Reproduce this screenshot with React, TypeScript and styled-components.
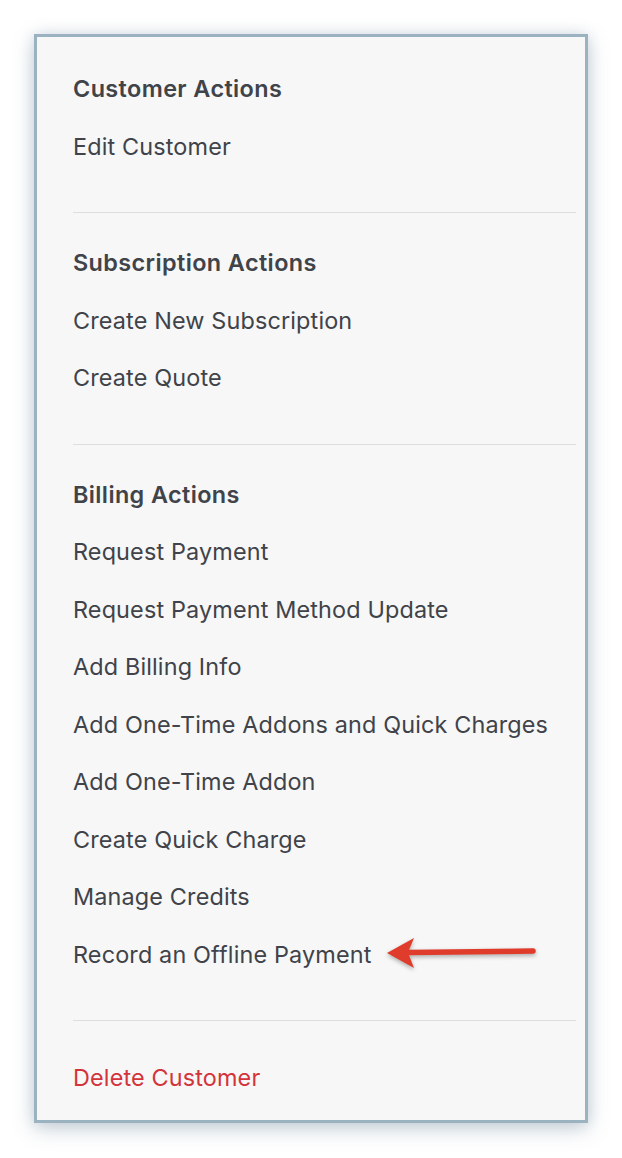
import React from "react";
import styled, { createGlobalStyle } from "styled-components";

const Global = createGlobalStyle`
  html, body { margin: 0; padding: 0; background: #ffffff; }
  body { font-family: Inter, "Noto Sans", sans-serif; -webkit-font-smoothing: antialiased; }
`;

const Page = styled.div`
  padding: 34px 0 35px 34px;
`;

const Panel = styled.div`
  position: relative;
  box-sizing: border-box;
  width: 554px;
  height: 1089px;
  background: #f7f7f7;
  border: 3px solid #9bb3c1;
  box-shadow: 0 6px 20px rgba(70, 100, 125, 0.28), 0 0 12px rgba(70, 100, 125, 0.14);
  padding: 23px 9px 0 36px;
  display: flex;
  flex-direction: column;
`;

const Section = styled.section<{ $top: number; $bottom: number; $divider?: boolean }>`
  padding: ${(p) => p.$top}px 0 ${(p) => p.$bottom}px;
  border-top: ${(p) => (p.$divider ? "1px solid #dedee1" : "none")};
`;

const Row = styled.div<{ $kind?: "heading" | "danger" }>`
  height: 57.5px;
  display: flex;
  align-items: center;
  font-size: 23.4px;
  font-weight: ${(p) => (p.$kind === "heading" ? 600 : 400)};
  color: ${(p) => (p.$kind === "danger" ? "#d3343a" : "#404349")};
  letter-spacing: ${(p) => (p.$kind === "heading" ? "0.4px" : "0.15px")};
  white-space: nowrap;
`;

const Pointer = styled.svg`
  position: absolute;
  left: 350px;
  top: 898px;
  overflow: visible;
  filter: drop-shadow(0 2px 2px rgba(0, 0, 0, 0.3));
`;

type Group = { title?: string; items: string[]; top: number; bottom: number; divider?: boolean; danger?: boolean };

const groups: Group[] = [
  { title: "Customer Actions", items: ["Edit Customer"], top: 0, bottom: 37 },
  {
    title: "Subscription Actions",
    items: ["Create New Subscription", "Create Quote"],
    top: 21,
    bottom: 37,
    divider: true,
  },
  {
    title: "Billing Actions",
    items: [
      "Request Payment",
      "Request Payment Method Update",
      "Add Billing Info",
      "Add One-Time Addons and Quick Charges",
      "Add One-Time Addon",
      "Create Quick Charge",
      "Manage Credits",
      "Record an Offline Payment",
    ],
    top: 21,
    bottom: 37,
    divider: true,
  },
  { items: ["Delete Customer"], top: 28, bottom: 13, divider: true, danger: true },
];

export default function App() {
  return (
    <>
      <Global />
      <Page>
        <Panel>
          {groups.map((g, i) => (
            <Section key={i} $top={g.top} $bottom={g.bottom} $divider={g.divider}>
              {g.title && <Row $kind="heading">{g.title}</Row>}
              {g.items.map((it) => (
                <Row key={it} $kind={g.danger ? "danger" : undefined}>
                  {it}
                </Row>
              ))}
            </Section>
          ))}
          <Pointer width="150" height="34" viewBox="0 0 150 34">
            <path d="M22 17.5 L146 16" stroke="#e03c2c" strokeWidth="5.5" strokeLinecap="round" />
            <path d="M0 18 L27 3 L21 17.5 L27 33 Z" fill="#e03c2c" />
          </Pointer>
        </Panel>
      </Page>
    </>
  );
}
